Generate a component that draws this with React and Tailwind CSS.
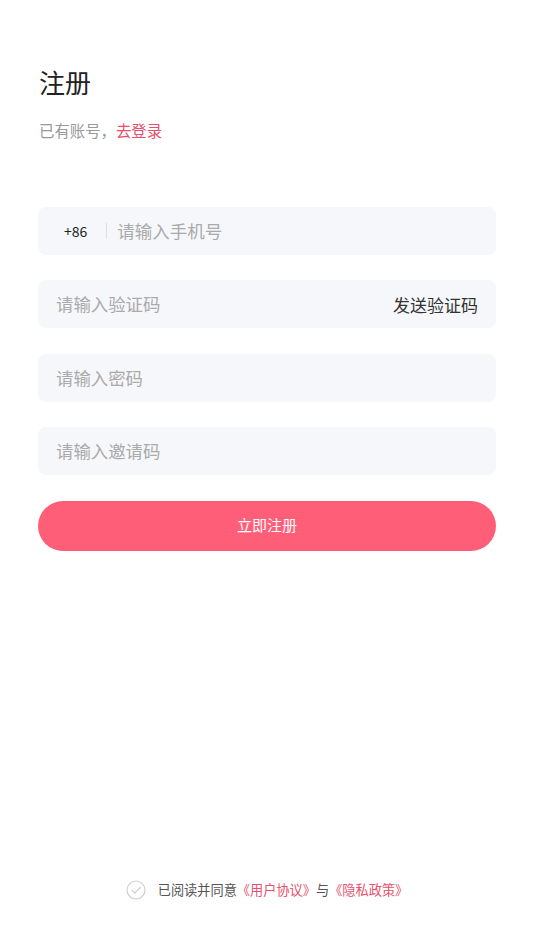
export default function App() {
  const font = { fontFamily: '"Noto Sans CJK SC", "Noto Sans", sans-serif' };

  return (
    <div
      className="min-h-screen bg-white flex flex-col px-[38px] pt-[64px] pb-[50px] font-['Noto_Sans_CJK_SC',sans-serif]"
      style={font}
    >
      {/* Header */}
      <h1 className="pl-px text-[26px] leading-[36px] text-[#222] font-normal">注册</h1>
      <p className="mt-[19px] pl-px text-[15.4px] leading-[22px] text-[#999]">
        已有账号，<span className="text-[#e8506c]">去登录</span>
      </p>

      {/* Form */}
      <div className="mt-[66px] flex flex-col gap-[25.4px]">
        <div className="h-12 rounded-lg bg-[#f6f7fa] flex items-center pl-[26px] pr-[18px]">
          <span className="text-[14px] text-[#222]">+86</span>
          <span className="mx-[10px] ml-[19px] h-4 w-px bg-[#ddd]" />
          <input
            className="flex-1 bg-transparent outline-none text-[17.5px] text-[#333] placeholder:text-[#aaa]"
            placeholder="请输入手机号"
          />
        </div>
        <div className="h-12 rounded-lg bg-[#f6f7fa] flex items-center px-[18px]">
          <input
            className="flex-1 bg-transparent outline-none text-[17.4px] text-[#333] placeholder:text-[#aaa]"
            placeholder="请输入验证码"
          />
          <span className="text-[17px] text-[#333]">发送验证码</span>
        </div>
        <div className="h-12 rounded-lg bg-[#f6f7fa] flex items-center px-[18px]">
          <input
            type="password"
            className="flex-1 bg-transparent outline-none text-[17.4px] text-[#333] placeholder:text-[#aaa]"
            placeholder="请输入密码"
          />
        </div>
        <div className="h-12 rounded-lg bg-[#f6f7fa] flex items-center px-[18px]">
          <input
            className="flex-1 bg-transparent outline-none text-[17.4px] text-[#333] placeholder:text-[#aaa]"
            placeholder="请输入邀请码"
          />
        </div>
        <button className="h-[50px] rounded-full bg-[#ff5e78] text-white text-[15px]">
          立即注册
        </button>
      </div>

      {/* Agreement */}
      <div className="mt-auto flex items-center justify-center gap-[12px] text-[13.2px] leading-5">
        <svg width="20" height="20" viewBox="0 0 20 20" fill="none">
          <circle cx="10" cy="10" r="9" stroke="#cfcfcf" strokeWidth="1.2" />
          <path d="M5.8 10.2l2.9 2.9 5.5-5.6" stroke="#cfcfcf" strokeWidth="1.2" strokeLinecap="round" strokeLinejoin="round" />
        </svg>
        <p className="text-[#555]">
          已阅读并同意<span className="text-[#e8506c]">《用户协议》</span>与
          <span className="text-[#e8506c]">《隐私政策》</span>
        </p>
      </div>
    </div>
  );
}
